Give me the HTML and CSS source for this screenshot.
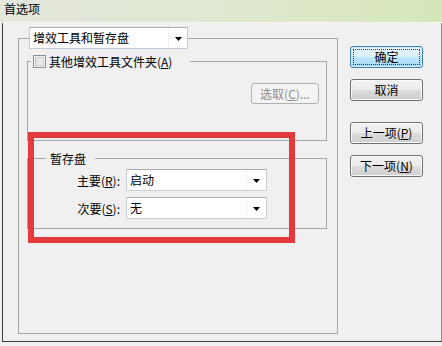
FILE: index.html
```html
<!DOCTYPE html>
<html lang="zh-CN">
<head>
<meta charset="utf-8">
<title>首选项</title>
<link rel="stylesheet" href="styles.css">
</head>
<body>
<div class="window">
  <div class="titlebar">首选项</div>
  <div class="client">
    <fieldset class="main-group">
      <legend class="main-legend">
        <div class="combo combo-main">
          <span class="combo-text">增效工具和暂存盘</span>
          <span class="combo-btn"><svg width="7" height="4" viewBox="0 0 7 4"><path d="M0 0h7L3.5 4z" fill="#000"/></svg></span>
        </div>
      </legend>
      <fieldset class="group plugins">
        <legend class="check-legend"><span class="checkbox"></span><span>其他增效工具文件夹(<u>A</u>)</span></legend>
        <div class="choose-row"><button class="btn btn-disabled">选取(<u>C</u>)...</button></div>
      </fieldset>
      <fieldset class="group scratch">
        <legend class="text-legend">暂存盘</legend>
        <div class="form-row">
          <label class="row-label">主要(<u>R</u>):</label>
          <div class="combo combo-small">
            <span class="combo-text">启动</span>
            <span class="combo-btn"><svg width="7" height="4" viewBox="0 0 7 4"><path d="M0 0h7L3.5 4z" fill="#000"/></svg></span>
          </div>
        </div>
        <div class="form-row">
          <label class="row-label">次要(<u>S</u>):</label>
          <div class="combo combo-small">
            <span class="combo-text">无</span>
            <span class="combo-btn"><svg width="7" height="4" viewBox="0 0 7 4"><path d="M0 0h7L3.5 4z" fill="#000"/></svg></span>
          </div>
        </div>
      </fieldset>
    </fieldset>
    <div class="buttons">
      <button class="btn btn-default"><span class="focus">确定</span></button>
      <button class="btn btn-cancel">取消</button>
      <button class="btn btn-prev">上一项(<u>P</u>)</button>
      <button class="btn btn-next">下一项(<u>N</u>)</button>
    </div>
  </div>
  <div class="annotation"></div>
</div>
</body>
</html>
```

FILE: styles.css
```css
html, body {
  margin: 0;
  padding: 0;
  background: #e9ece4;
}

.window {
  position: relative;
  width: 442px;
  height: 346px;
  overflow: hidden;
  font-family: "Noto Sans CJK SC", "Liberation Sans", sans-serif;
  font-size: 12px;
  color: #000;
  background: #f0f0f0;
}

.titlebar {
  height: 23px;
  line-height: 18px;
  padding-left: 4px;
  box-sizing: border-box;
  background: linear-gradient(to right, #e3e7dd 0%, #e0e8d2 45%, #d6e6b9 100%);
  border-bottom: 1px solid #f4f6ef;
}

.client {
  display: flex;
  align-items: flex-start;
  margin-left: 2px;
  height: 319px;
  box-sizing: border-box;
  border-left: 1px solid #3b3f36;
  border-bottom: 1px solid #3b3f36;
  border-right: 1px solid #8a8f86;
  padding-top: 4px;
  background: #f0f0f0;
}

.main-group {
  margin: 0 0 0 15px;
  padding: 0;
  width: 320px;
  height: 307px;
  box-sizing: border-box;
  border: 1px solid #a7a7a7;
  min-width: 0;
}

.main-legend {
  margin-left: 10px;
  padding: 0;
}

.combo {
  display: flex;
  box-sizing: border-box;
  background: #fff;
  border: 1px solid #c6ccd3;
  border-top-color: #abadb3;
  border-radius: 1px;
}

.combo-main {
  width: 159px;
  height: 22px;
}

.combo-text {
  flex: 1;
  padding-left: 3px;
  line-height: 19px;
  white-space: nowrap;
}

.combo-btn {
  width: 18px;
  display: flex;
  align-items: center;
  justify-content: center;
  border-left: 1px solid #eef2f6;
  padding-top: 1px;
}

.group {
  margin: 5px 10px 0 8px;
  padding: 0;
  width: 300px;
  box-sizing: border-box;
  border: 1px solid #a7a7a7;
  min-width: 0;
}

.check-legend {
  margin-left: 3px;
  padding: 0 18px 0 2px;
  display: flex;
  align-items: center;
  height: 15px;
  line-height: 15px;
}

.checkbox {
  width: 13px;
  height: 13px;
  box-sizing: border-box;
  border: 1px solid #8e8f8f;
  background: linear-gradient(135deg, #dcdcdc, #f6f6f6);
  box-shadow: inset 0 0 0 1px #f4f4f4, inset 0 0 0 2px #c9c9c9;
  margin-right: 3px;
}

.choose-row {
  display: flex;
  justify-content: flex-end;
  padding: 14px 7px 36px 0;
}

.btn {
  font-family: inherit;
  font-size: 12px;
  color: #000;
  padding: 0;
  margin: 0;
  box-sizing: border-box;
  border: 1px solid #707070;
  border-radius: 3px;
  background: linear-gradient(#f2f2f2 0%, #ebebeb 48%, #dddddd 52%, #cfcfcf 100%);
  box-shadow: inset 0 0 0 1px #fbfbfb;
  line-height: 18px;
}

.btn-disabled {
  width: 68px;
  height: 21px;
  color: #8d8d8d;
  border-color: #adb2b5;
  background: #f4f4f4;
  box-shadow: none;
}

.scratch {
  margin-top: 10px;
  padding: 3px 0 9px 0;
}

.text-legend {
  margin-left: 18px;
  padding: 0 9px 0 4px;
  height: 15px;
  line-height: 15px;
}

.form-row {
  display: flex;
  align-items: center;
  gap: 6px;
}

.form-row + .form-row {
  margin-top: 6px;
}

.row-label {
  width: 92px;
  text-align: right;
}

.combo-small {
  width: 141px;
  height: 22px;
}

.combo-small .combo-btn {
  width: 19px;
}

.buttons {
  display: flex;
  flex-direction: column;
  margin-left: 12px;
  margin-top: 19px;
  width: 73px;
}

.buttons .btn {
  width: 73px;
  height: 22px;
}

.btn-default {
  border-color: #3c7fb1;
  background: linear-gradient(#eaf6fd 0%, #d9f0fc 48%, #bee6fd 52%, #a7d9f5 100%);
  box-shadow: inset 0 0 0 1px #d1ecfa;
  padding: 2px !important;
}

.btn-default .focus {
  display: block;
  height: 100%;
  box-sizing: border-box;
  border: 1px dotted #333;
  line-height: 14px;
}

.btn-cancel {
  margin-top: 11px;
}

.btn-prev {
  margin-top: 21px;
}

.btn-next {
  margin-top: 11px;
}

u {
  text-decoration: underline;
  text-underline-offset: 1px;
}

.annotation {
  position: absolute;
  left: 28px;
  top: 132px;
  width: 267px;
  height: 111px;
  box-sizing: border-box;
  border: 6px solid #e33b3d;
  pointer-events: none;
}
```
